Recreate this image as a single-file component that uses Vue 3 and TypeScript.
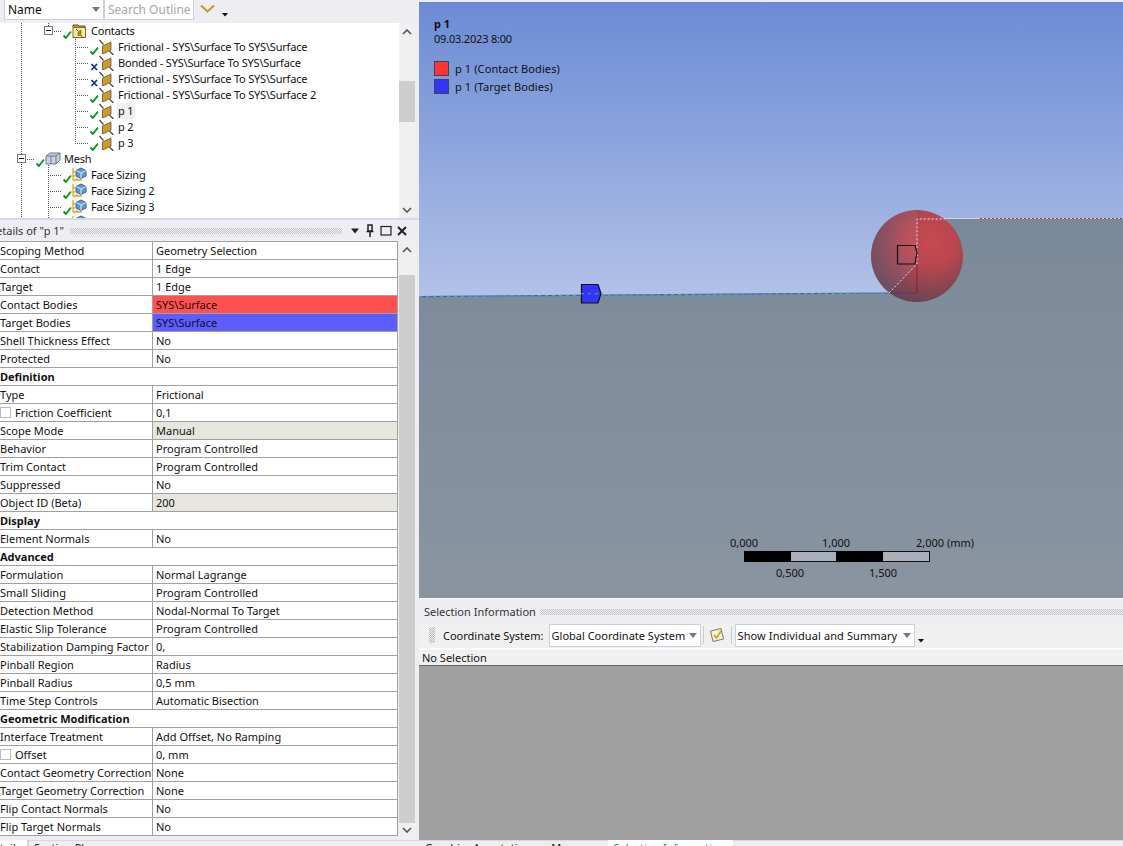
<script setup lang="ts">
type Kind = 'folder' | 'contact' | 'mesh' | 'size'
interface TreeRow { label: string; kind: Kind; state: 'ok' | 'x'; left: number; selected?: boolean; expander?: number }
const treeRows: TreeRow[] = [
  { label: 'Contacts', kind: 'folder', state: 'ok', left: 62, expander: 44 },
  { label: 'Frictional - SYS\\Surface To SYS\\Surface', kind: 'contact', state: 'ok', left: 89 },
  { label: 'Bonded - SYS\\Surface To SYS\\Surface', kind: 'contact', state: 'x', left: 89 },
  { label: 'Frictional - SYS\\Surface To SYS\\Surface', kind: 'contact', state: 'x', left: 89 },
  { label: 'Frictional - SYS\\Surface To SYS\\Surface 2', kind: 'contact', state: 'ok', left: 89 },
  { label: 'p 1', kind: 'contact', state: 'ok', left: 89, selected: true },
  { label: 'p 2', kind: 'contact', state: 'ok', left: 89 },
  { label: 'p 3', kind: 'contact', state: 'ok', left: 89 },
  { label: 'Mesh', kind: 'mesh', state: 'ok', left: 35, expander: 17 },
  { label: 'Face Sizing', kind: 'size', state: 'ok', left: 62 },
  { label: 'Face Sizing 2', kind: 'size', state: 'ok', left: 62 },
  { label: 'Face Sizing 3', kind: 'size', state: 'ok', left: 62 },
  { label: '', kind: 'size', state: 'ok', left: 62 },
]

interface Row { k: string; v?: string; cls?: string; box?: boolean; head?: boolean }
const rows: Row[] = [
  { k: 'Scoping Method', v: 'Geometry Selection' },
  { k: 'Contact', v: '1 Edge' },
  { k: 'Target', v: '1 Edge' },
  { k: 'Contact Bodies', v: 'SYS\\Surface', cls: 'red' },
  { k: 'Target Bodies', v: 'SYS\\Surface', cls: 'blue' },
  { k: 'Shell Thickness Effect', v: 'No' },
  { k: 'Protected', v: 'No' },
  { k: 'Definition', head: true },
  { k: 'Type', v: 'Frictional' },
  { k: 'Friction Coefficient', v: '0,1', box: true },
  { k: 'Scope Mode', v: 'Manual', cls: 'grey' },
  { k: 'Behavior', v: 'Program Controlled' },
  { k: 'Trim Contact', v: 'Program Controlled' },
  { k: 'Suppressed', v: 'No' },
  { k: 'Object ID (Beta)', v: '200', cls: 'grey' },
  { k: 'Display', head: true },
  { k: 'Element Normals', v: 'No' },
  { k: 'Advanced', head: true },
  { k: 'Formulation', v: 'Normal Lagrange' },
  { k: 'Small Sliding', v: 'Program Controlled' },
  { k: 'Detection Method', v: 'Nodal-Normal To Target' },
  { k: 'Elastic Slip Tolerance', v: 'Program Controlled' },
  { k: 'Stabilization Damping Factor', v: '0,' },
  { k: 'Pinball Region', v: 'Radius' },
  { k: 'Pinball Radius', v: '0,5 mm' },
  { k: 'Time Step Controls', v: 'Automatic Bisection' },
  { k: 'Geometric Modification', head: true },
  { k: 'Interface Treatment', v: 'Add Offset, No Ramping' },
  { k: 'Offset', v: '0, mm', box: true },
  { k: 'Contact Geometry Correction', v: 'None' },
  { k: 'Target Geometry Correction', v: 'None' },
  { k: 'Flip Contact Normals', v: 'No' },
  { k: 'Flip Target Normals', v: 'No' },
]
</script>

<template>
  <div class="app">
    <aside class="left">
      <div class="outline-bar">
        <div class="combo name-combo"><span>Name</span><i class="tri"></i></div>
        <div class="combo search-combo">Search Outline</div>
        <svg class="chev" width="16" height="10" viewBox="0 0 16 10"><path d="M1 1.5 L7.5 7.5 L14 1.5" fill="none" stroke="#c8971f" stroke-width="2"/></svg>
        <svg class="more" width="6" height="5" viewBox="0 0 6 5"><path d="M0 1H6L3 4.5Z" fill="#111"/></svg>
      </div>
      <div class="tree-wrap">
        <div class="tree">
          <svg class="guides" width="399" height="195" viewBox="0 0 399 195">
            <g stroke="#555" stroke-dasharray="1 1" fill="none" shape-rendering="crispEdges">
              <path d="M21.5 0V131M21.5 141V195"/>
              <path d="M48.5 0V3M48.5 142V195"/>
              <path d="M75.5 16V121"/>
              <path d="M54 8.5H62M75 24.5H89M75 40.5H89M75 56.5H89M75 72.5H89M75 88.5H89M75 104.5H89M75 120.5H89"/>
              <path d="M27 136.5H35M48 152.5H62M48 168.5H62M48 184.5H62"/>
            </g>
          </svg>
          <div v-for="(r, i) in treeRows" :key="i" class="tree-row" :style="{ paddingLeft: r.left + 'px' }">
            <span v-if="r.expander" class="expander" :style="{ left: r.expander + 'px' }"></span>
            <svg v-if="r.state === 'ok'" class="state" width="11" height="16" viewBox="0 0 11 16"><path d="M1.6 12.5 L3.8 15 L9 8.5" fill="none" stroke="#0c9a1c" stroke-width="2"/></svg>
            <svg v-else class="state" width="11" height="16" viewBox="0 0 11 16"><path d="M2.5 9 L8 15 M8 9 L2.5 15" fill="none" stroke="#14308c" stroke-width="1.7"/></svg>
            <svg v-if="r.kind === 'contact'" class="ico" width="16" height="16" viewBox="0 0 16 16">
              <path d="M0.5 1 L4.5 5.5 M10.5 12 L14.5 16" stroke="#444" stroke-width="1.2"/>
              <path d="M3.5 7 L12 3 V11 L3.5 15Z" fill="#c99a2e" stroke="#5a4410" stroke-width=".7"/>
            </svg>
            <svg v-else-if="r.kind === 'folder'" class="ico" width="16" height="16" viewBox="0 0 16 16">
              <path d="M1 4 V2 H6 L7 3 H13 V4" fill="#c99a2e" stroke="#6a5010"/>
              <rect x="1" y="4.5" width="12.5" height="10" fill="#f6e9a8" stroke="#8a6a18"/>
              <path d="M4 6 L6 8 M8.5 12 L10.5 14" stroke="#444"/>
              <path d="M6 9 L9 7 V11.5 L6 13Z" fill="#b98a20" stroke="#5a4410" stroke-width=".5"/>
            </svg>
            <svg v-else-if="r.kind === 'mesh'" class="ico" width="16" height="16" viewBox="0 0 16 16">
              <path d="M1 5 L5 2 H15 V9 L11 13 H1Z" fill="#c5d2e0" stroke="#6a7688"/>
              <path d="M1 5 H11 V13 M11 5 L15 2 M6 5 V13" fill="none" stroke="#6a7688"/>
            </svg>
            <svg v-else class="ico" width="16" height="16" viewBox="0 0 16 16">
              <path d="M1 1 V13 H10 M1 5 H3 M1 9 H3 M5 13 V11" fill="none" stroke="#d8a828" stroke-width="1.3"/>
              <path d="M4 3.5 L9 1 L14 3.5 V9 L9 11.5 L4 9Z" fill="#5d9ad6" stroke="#3c5f86"/>
              <path d="M4 3.5 L9 6 L14 3.5 M9 6 V11.5" fill="none" stroke="#dfeaf5"/>
            </svg>
            <span class="label" :class="{ selected: r.selected }">{{ r.label }}</span>
          </div>
        </div>
        <div class="scrollbar tree-scroll">
          <svg class="arrow" width="10" height="6" viewBox="0 0 10 6"><path d="M1 5 L5 1 L9 5" fill="none" stroke="#555" stroke-width="1.6"/></svg>
          <div class="thumb"></div>
          <svg class="arrow end" width="10" height="6" viewBox="0 0 10 6"><path d="M1 1 L5 5 L9 1" fill="none" stroke="#555" stroke-width="1.6"/></svg>
        </div>
      </div>
      <div class="details-head">
        <span class="title">Details of "p 1"</span>
        <span class="hatch"></span>
        <svg width="10" height="6" viewBox="0 0 10 6"><path d="M1 0.5H9L5 5.5Z" fill="#222"/></svg>
        <svg width="10" height="14" viewBox="0 0 10 14"><path d="M3 1H7V7H3Z M1.5 7.5H8.5 M5 8V13" fill="none" stroke="#222" stroke-width="1.5"/></svg>
        <svg width="12" height="11" viewBox="0 0 12 11"><rect x="1" y="1.5" width="10" height="8.5" fill="none" stroke="#222" stroke-width="1.2"/></svg>
        <svg width="10" height="10" viewBox="0 0 10 10"><path d="M1 1L9 9M9 1L1 9" stroke="#222" stroke-width="2"/></svg>
      </div>
      <div class="details-body">
        <div class="table">
          <div v-for="r in rows" :key="r.k" class="row" :class="{ head: r.head }">
            <div class="key"><i v-if="r.box" class="box"></i>{{ r.k }}</div>
            <div v-if="!r.head" class="val" :class="r.cls">{{ r.v }}</div>
          </div>
        </div>
        <div class="scrollbar detail-scroll">
          <svg class="arrow" width="10" height="6" viewBox="0 0 10 6"><path d="M1 5 L5 1 L9 5" fill="none" stroke="#555" stroke-width="1.6"/></svg>
          <div class="thumb"></div>
          <svg class="arrow end" width="10" height="6" viewBox="0 0 10 6"><path d="M1 1 L5 5 L9 1" fill="none" stroke="#555" stroke-width="1.6"/></svg>
        </div>
      </div>
      <div class="tabs left-tabs">
        <span class="tab active">Details</span>
        <span class="tab">Section Planes</span>
      </div>
    </aside>

    <main class="right">
      <div class="viewport">
        <svg class="scene" width="704" height="596" viewBox="419 2 704 596">
          <defs>
            <linearGradient id="sky" x1="0" y1="0" x2="0" y2="1">
              <stop offset="0" stop-color="#6b8bd5"/>
              <stop offset="0.5" stop-color="#b3c2e7"/>
              <stop offset="1" stop-color="#cbd6ee"/>
            </linearGradient>
            <linearGradient id="ground" x1="0" y1="0" x2="0" y2="1">
              <stop offset="0" stop-color="#7a8999"/>
              <stop offset="1" stop-color="#8a94a1"/>
            </linearGradient>
            <radialGradient id="ball" cx="0.66" cy="0.34" r="0.8">
              <stop offset="0" stop-color="#c84a50"/>
              <stop offset="0.35" stop-color="#b84650"/>
              <stop offset="0.72" stop-color="#7d4552"/>
              <stop offset="1" stop-color="#544452"/>
            </radialGradient>
            <clipPath id="ballClip"><circle cx="917" cy="256" r="46"/></clipPath>
          </defs>
          <rect x="419" y="2" width="704" height="596" fill="url(#sky)"/>
          <path d="M419 297 L889 293 H917 V219 H1123 V598 H419Z" fill="url(#ground)"/>
          <circle cx="917" cy="256" r="46" fill="url(#ball)"/>
          <path d="M860 293 L889 293 L917 264 V205 H860Z" fill="#b6bee0" opacity=".1" clip-path="url(#ballClip)"/>
          <path d="M889 293 H917" fill="none" stroke="#5a3a70" stroke-width="1"/>
          <path d="M917 293 V264" fill="none" stroke="#8a2030" stroke-width="1"/>
          <path d="M419 296.6 L889 293" stroke="#3f5fd0" stroke-width="1.2" fill="none"/>
          <path d="M419 296.6 L889 293" stroke="#4fb06a" stroke-width="1.2" stroke-dasharray="3 4" fill="none"/>
          <path d="M889 293 L917 264 V219 H945" stroke="#dfe6e6" stroke-width="1" stroke-dasharray="2 2" fill="none"/>
          <path d="M945 218.5 H1123" stroke="#d8d0d4" stroke-width="1" fill="none"/>
          <path d="M980 218.5 H1123" stroke="#d62a20" stroke-width="1" stroke-dasharray="2 2" fill="none"/>
          <path d="M581.5 284.5 H598 L601 293.5 L598 303 H581.5Z" fill="#3434ff" stroke="#111" stroke-width="1.2"/>
          <path d="M581 293.7 H601" stroke="#4fb06a" stroke-width="1" stroke-dasharray="3 4"/>
          <path d="M897.5 245.5 H915 L917 252 L915 264 H897.5Z" fill="none" stroke="#111" stroke-width="1.2"/>
          <g>
            <rect x="744.5" y="551.5" width="185" height="10" fill="#a9b0bb" stroke="#111"/>
            <rect x="744" y="551" width="47" height="11" fill="#000"/>
            <rect x="836" y="551" width="47" height="11" fill="#000"/>
          </g>
        </svg>
        <div class="legend">
          <div class="lg-title">p 1</div>
          <div class="lg-date">09.03.2023 8:00</div>
          <div class="lg-item first"><i class="sw" style="background:#ff3333"></i>p 1 (Contact Bodies)</div>
          <div class="lg-item"><i class="sw" style="background:#3333ff"></i>p 1 (Target Bodies)</div>
        </div>
        <span class="tick" style="left:311px;top:534px">0,000</span>
        <span class="tick" style="left:403px;top:534px">1,000</span>
        <span class="tick" style="left:497px;top:534px">2,000 (mm)</span>
        <span class="tick" style="left:357px;top:564px">0,500</span>
        <span class="tick" style="left:450px;top:564px">1,500</span>
      </div>
      <div class="sel-panel">
        <div class="sel-head"><span>Selection Information</span><span class="hatch"></span></div>
        <div class="sel-bar">
          <span class="grip"></span>
          <span class="cs-label">Coordinate System:</span>
          <div class="combo cs-combo"><span class="clip">Global Coordinate System</span><i class="tri"></i></div>
          <span class="sep"></span>
          <svg class="cbx" width="16" height="16" viewBox="0 0 16 16"><path d="M1.5 4 L12 1.5 L14.5 12 L4 14.5Z" fill="#f7f1d8" stroke="#777"/><path d="M5 8 L7.5 11 L12 4" fill="none" stroke="#d6a21e" stroke-width="1.8"/></svg>
          <span class="sep sep-b"></span>
          <div class="combo show-combo"><span>Show Individual and Summary</span><i class="tri"></i></div>
          <svg class="more2" width="6" height="5" viewBox="0 0 6 5"><path d="M0 1H6L3 4.5Z" fill="#111"/></svg>
        </div>
        <div class="no-sel">No Selection</div>
        <div class="grey-area"></div>
      </div>
      <div class="tabs right-tabs">
        <span class="tab">Graphics Annotations</span>
        <span class="tab msg">Messages</span>
        <span class="tab active">Selection Information</span>
      </div>
    </main>
  </div>
</template>

<style>
html, body { margin: 0; background: #eeeef2; overflow: hidden; }
</style>

<style scoped>
.app {
  width: 1123px; height: 846px; display: flex; overflow: hidden;
  font-family: "Noto Sans", "Liberation Sans", sans-serif; font-size: 11px; color: #111;
  background: #eeeef2;
}
.left { width: 419px; flex: none; display: flex; flex-direction: column; overflow: hidden; }
.outline-bar { height: 23px; display: flex; align-items: flex-start; background: #eeeef2; padding-left: 4px; flex: none; }
.combo {
  background: #fff; border: 1px solid #cfcfe4; box-sizing: border-box; display: flex; align-items: center;
  justify-content: space-between; white-space: nowrap;
}
.name-combo { width: 100px; height: 21px; padding: 0 3px; font-size: 12px; margin-top: -1px; }
.search-combo { width: 90px; height: 21px; padding: 0 3px; color: #a6a6a6; font-size: 12px; margin-top: -1px; }
.tri { width: 0; height: 0; border: 4px solid transparent; border-top: 5px solid #777; border-bottom: 0; flex: none; }
.chev { margin: 4px 0 0 6px; }
.more { margin: 12px 0 0 6px; }
.tree-wrap { height: 195px; display: flex; flex: none; }
.tree { width: 399px; background: #fff; position: relative; overflow: hidden; flex: none; }
.guides { position: absolute; left: 0; top: 0; }
.tree-row { height: 16px; display: flex; align-items: center; position: relative; white-space: nowrap; letter-spacing: -0.2px; }
.expander {
  position: absolute; top: 3px; width: 9px; height: 9px; background: #fff; border: 1px solid #777;
  box-sizing: border-box;
}
.expander::after { content: ""; position: absolute; left: 1px; right: 1px; top: 3px; height: 1px; background: #111; }
.state { flex: none; position: relative; }
.ico { flex: none; margin-left: -1px; position: relative; }
.label { margin-left: 2px; padding: 0 2px 0 1px; line-height: 16px; position: relative; }
.selected { background: #f0f0f0; }
.scrollbar { width: 16px; background: #f0f0f0; flex: none; position: relative; display: flex; flex-direction: column; align-items: center; }
.arrow { flex: none; margin-top: 6px; }
.tree-scroll .thumb { width: 16px; height: 41px; background: #cdcdcd; margin-top: 46px; }
.arrow.end { margin-top: auto; margin-bottom: 5px; }
.detail-scroll { margin-left: 1px; height: 597px; }
.detail-scroll .thumb { width: 16px; height: 548px; background: #cdcdcd; margin-top: 22px; }
.details-head { height: 23px; display: flex; align-items: center; gap: 4px; background: #eeeef2; flex: none; box-sizing: border-box; padding-right: 12px; border-top: 2px solid #d8d8e6; }
.title { margin-left: -12px; white-space: nowrap; color: #333; }
.hatch {
  flex: 1; height: 6px; min-width: 0;
  background: repeating-conic-gradient(#c4c4cc 0 25%, transparent 0 50%) 0 0 / 2px 2px;
}
.details-head .hatch { margin-right: 3px; margin-left: 2px; }
.details-head svg { flex: none; margin-left: 1px; }
.details-body { height: 599px; display: flex; align-items: flex-start; flex: none; }
.table { width: 398px; flex: none; border-top: 1px solid #a0a0a0; background: #fff; }
.row { height: 18px; box-sizing: border-box; border-bottom: 1px solid #a0a0a0; border-right: 1px solid #a0a0a0; display: flex; line-height: 17px; white-space: nowrap; overflow: hidden; }
.key { width: 153px; flex: none; box-sizing: border-box; border-right: 1px solid #a0a0a0; display: flex; align-items: center; overflow: hidden; }
.row.head .key { width: auto; border-right: 0; font-weight: 700; }
.val { flex: 1; padding-left: 3px; }
.red { background: #ff5050; }
.blue { background: #5c5cff; }
.grey { background: #e6e5e0; }
.box { width: 9px; height: 9px; border: 1px solid #bbb; margin: 0 4px 0 0; flex: none; box-sizing: content-box; }
.tabs { flex: 1; display: flex; background: #eeeef2; min-height: 0; overflow: hidden; white-space: nowrap; box-shadow: inset 0 1px 0 #d8d8e6; }
.tab { padding: 1px 5px 0; line-height: 14px; height: 15px; }
.left-tabs .tab { padding: 1px 4px 0 5px; border-left: 1px solid #d0d0e0; }
.left-tabs .tab.active { background: #fff; width: 28px; box-sizing: border-box; padding: 1px 6px 0 0; border: 0; border-right: 1px solid #d0d0e0; text-align: right; overflow: hidden; direction: rtl; }
.left-tabs .tab:not(.active) { margin-left: 0; }
.right { flex: 1; min-width: 0; display: flex; flex-direction: column; }
.viewport { height: 596px; margin-top: 2px; position: relative; flex: none; overflow: hidden; }
.scene { display: block; }
.legend { position: absolute; left: 15px; top: 14px; font-size: 11px; color: #111; }
.lg-title { font-weight: 700; line-height: 15px; }
.lg-date { line-height: 15px; letter-spacing: -0.2px; }
.lg-item { display: flex; align-items: center; gap: 6px; height: 18px; white-space: nowrap; letter-spacing: 0.1px; }
.lg-item.first { margin-top: 13px; }
.sw { width: 13px; height: 13px; border: 1px solid #444; box-sizing: content-box; flex: none; }
.tick { position: absolute; white-space: nowrap; line-height: 14px; color: #111; }
.sel-panel { flex: none; height: 242px; display: flex; flex-direction: column; background: #eeeef2; }
.sel-head { height: 25px; display: flex; align-items: center; gap: 4px; padding: 1px 0 0 5px; box-sizing: border-box; color: #333; flex: none; border-top: 1px solid #fafafa; }
.sel-bar { height: 25px; display: flex; align-items: center; padding: 0 0 1px 10px; flex: none; box-sizing: border-box; background: #f0f0f0; }
.grip { width: 6px; height: 16px; background: repeating-conic-gradient(#bbb 0 25%, transparent 0 50%) 0 0 / 2px 2px; flex: none; }
.cs-label { margin-left: 8px; white-space: nowrap; }
.cs-combo { width: 152px; height: 23px; margin-left: 5px; padding: 0 3px 0 2px; }
.clip { width: 134px; overflow: hidden; }
.sep { width: 1px; height: 18px; background: #ccc; margin-left: 2px; flex: none; }
.sep-b { margin: 0 3px 0 0; }
.cbx { margin: 0 6px 0 5px; flex: none; }
.show-combo { width: 180px; height: 23px; padding: 0 3px 0 2px; letter-spacing: 0.1px; }
.more2 { margin: 10px 0 0 3px; }
.no-sel { height: 18px; line-height: 16px; border-top: 2px solid #fafafa; padding-left: 3px; background: #f0f0f0; box-sizing: border-box; flex: none; border-bottom: 1px solid #666; }
.grey-area { flex: 1; background: #a0a0a0; }
.right-tabs { padding-left: 1px; }
.right-tabs .msg { margin-left: 5px; }
.right-tabs .tab.active { background: #fff; color: #1c7ad0; margin-left: 1px; padding: 1px 5px 0; width: 115px; }
</style>
